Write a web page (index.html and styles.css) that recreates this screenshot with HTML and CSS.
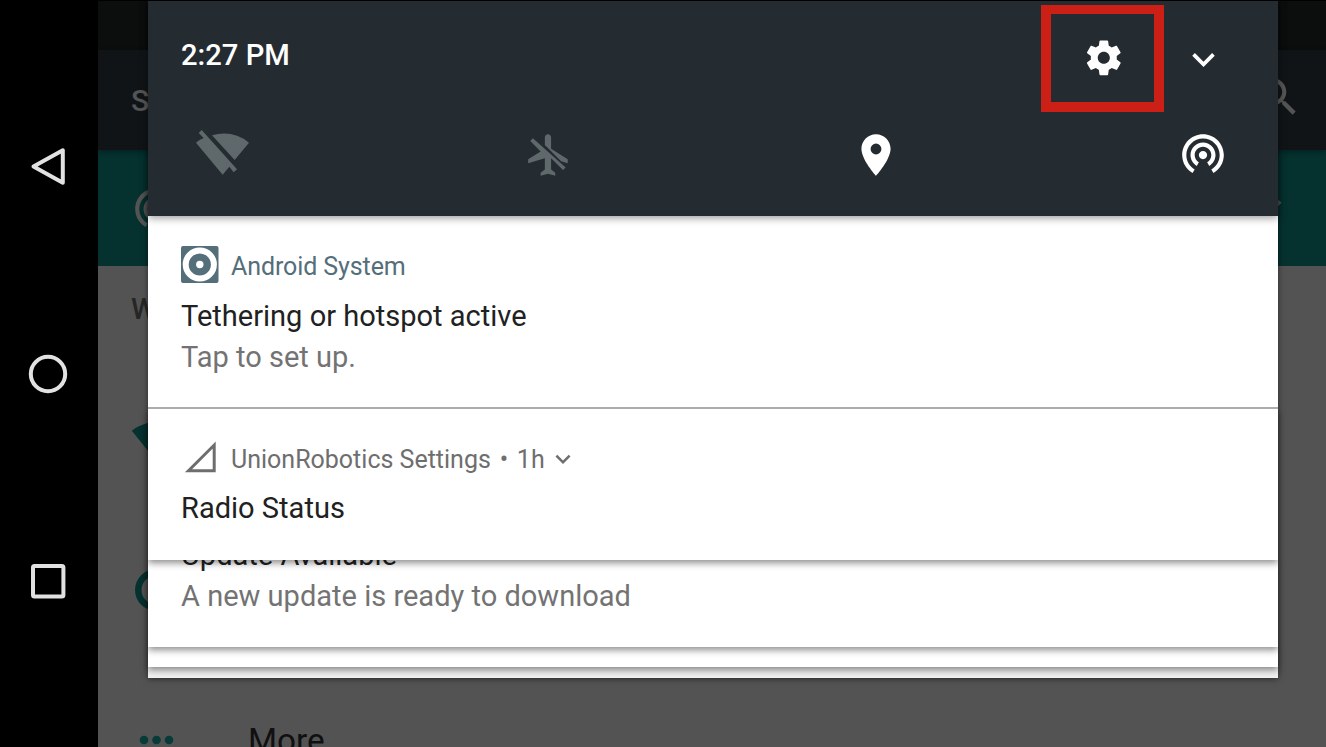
FILE: index.html
```html
<!DOCTYPE html>
<html lang="en">
<head>
<meta charset="utf-8">
<title>Notification shade</title>
<link rel="stylesheet" href="styles.css">
</head>
<body>
<svg class="defs" width="0" height="0">
  <symbol id="tether" viewBox="0 0 24 24"><path d="M12 11c-1.1 0-2 .9-2 2s.9 2 2 2 2-.9 2-2-.9-2-2-2zm6 2c0-3.31-2.69-6-6-6s-6 2.69-6 6c0 2.22 1.21 4.15 3 5.19l1-1.74c-1.19-.7-2-1.97-2-3.45 0-2.21 1.79-4 4-4s4 1.79 4 4c0 1.48-.81 2.75-2 3.45l1 1.74c1.79-1.04 3-2.97 3-5.19zM12 3C6.48 3 2 7.48 2 13c0 3.7 2.01 6.92 4.99 8.65l1-1.73C5.61 18.53 4 15.96 4 13c0-4.42 3.58-8 8-8s8 3.58 8 8c0 2.96-1.61 5.53-4 6.92l1 1.73c2.99-1.73 5-4.95 5-8.65 0-5.52-4.48-10-10-10z"/></symbol>
  <symbol id="chevron" viewBox="0 0 24 24"><path d="M7.41 8.59L12 13.17l4.59-4.58L18 10l-6 6-6-6z"/></symbol>
</svg>
<nav class="navbar">
  <svg class="nav-back" viewBox="0 0 40 44"><path d="M34.800 5.300V37.700L5.500 21.500Z"/></svg>
  <svg class="nav-home" viewBox="0 0 40 40"><circle cx="20" cy="20" r="17.200"/></svg>
  <svg class="nav-recent" viewBox="0 0 40 40"><rect x="5" y="5" width="30.400" height="30.400" rx="1.500"/></svg>
</nav>
<main class="app">
  <div class="app-status"></div>
  <header class="app-bar">
    <span class="app-title">S</span>
    <svg class="app-search" viewBox="0 0 24 24"><path d="M15.500 14h-.79l-.28-.27C15.410 12.590 16 11.110 16 9.500 16 5.910 13.090 3 9.500 3S3 5.910 3 9.500 5.910 16 9.500 16c1.610 0 3.090-.59 4.230-1.570l.27.28v.79l5 4.990L20.490 19l-4.990-5zm-6 0C7.010 14 5 11.990 5 9.500S7.010 5 9.500 5 14 7.010 14 9.500 11.990 14 9.500 14z"/></svg>
  </header>
  <section class="app-banner">
    <svg class="icon50"><use href="#tether"/></svg>
    <svg class="icon50"><use href="#chevron"/></svg>
  </section>
  <section class="app-list">
    <div class="list-heading">W</div>
    <svg class="list-wifi" viewBox="0 0 24 24"><path d="M12.010 21.490L23.640 7c-.45-.34-4.930-4-11.640-4C5.280 3 .81 6.660.36 7l11.630 14.490z"/></svg>
    <svg class="list-data" viewBox="0 0 42 42"><circle cx="21" cy="21" r="17.700"/></svg>
    <div class="list-more">
      <svg class="dots" viewBox="0 0 36 10"><circle cx="5" cy="5" r="4.300"/><circle cx="17.500" cy="5" r="4.300"/><circle cx="30" cy="5" r="4.300"/></svg>
      <span>More</span>
    </div>
  </section>
</main>
<aside class="shade">
  <header class="quick">
    <div class="quick-top">
      <span class="clock">2:27 PM</span>
      <div class="settings-box">
        <svg class="gear" viewBox="0 0 24 24"><path d="M19.430 12.980c.04-.32.070-.64.070-.98s-.03-.66-.07-.98l2.110-1.650c.19-.15.240-.42.120-.64l-2-3.460c-.12-.22-.39-.3-.61-.22l-2.490 1c-.52-.4-1.080-.73-1.690-.98l-.38-2.650C14.460 2.180 14.250 2 14 2h-4c-.25 0-.46.180-.49.420l-.38 2.650c-.61.250-1.170.590-1.690.980l-2.490-1c-.23-.09-.49 0-.61.220l-2 3.460c-.13.220-.07.490.120.640l2.110 1.650c-.04.320-.07.650-.07.980s.03.660.070.980l-2.110 1.650c-.19.150-.24.420-.12.640l2 3.460c.12.220.39.300.61.220l2.490-1c.52.400 1.080.730 1.690.980l.38 2.650c.03.240.240.420.490.420h4c.25 0 .46-.18.490-.42l.38-2.650c.61-.25 1.170-.59 1.690-.98l2.490 1c.23.090.490 0 .61-.22l2-3.460c.12-.22.070-.49-.12-.64l-2.110-1.650zM12 15.500c-1.930 0-3.500-1.570-3.500-3.500s1.570-3.500 3.500-3.500 3.500 1.570 3.500 3.500-1.570 3.500-3.500 3.500z"/></svg>
      </div>
      <svg class="expand"><use href="#chevron"/></svg>
    </div>
    <div class="quick-row">
      <svg class="wifi-off" viewBox="315 386 165 141"><path d="M326 398L335 389 441 507 431 516 418 499 398 523 318 427Q328 418 341 413ZM366 405Q428 388 477 427L434 479Z"/></svg>
      <svg class="icon50 off" viewBox="0 0 24 24"><path d="M13 9V3.500C13 2.670 12.330 2 11.500 2S10 2.670 10 3.500v3.680l7.830 7.830L21 16v-2l-8-5zM3 5.270l4.990 4.990L2 14v2l8-2.500V19l-2 1.500V22l3.500-1 3.500 1v-1.500L13 19v-5.500l5.730 5.730L20 17.960 4.270 4 3 5.270z"/></svg>
      <svg class="icon50" viewBox="0 0 24 24"><path d="M12 2C8.130 2 5 5.130 5 9c0 5.250 7 13 7 13s7-7.750 7-13c0-3.870-3.130-7-7-7zm0 9.700a2.600 2.600 0 1 1 0-5.200 2.600 2.600 0 0 1 0 5.200z"/></svg>
      <svg class="tether-icon" viewBox="0 0 24 24"><use href="#tether"/></svg>
    </div>
  </header>
  <article class="card system">
    <div class="card-head">
      <svg class="card-icon" viewBox="0 0 38 37"><rect width="37.500" height="37" rx="2" fill="#546e7a"/><circle cx="18.800" cy="18.500" r="14.100" fill="none" stroke="#fff" stroke-width="6"/><circle cx="18.800" cy="18.500" r="3.700" fill="#fff"/></svg>
      <span>Android System</span>
    </div>
    <h2>Tethering or hotspot active</h2>
    <p>Tap to set up.</p>
  </article>
  <article class="card radio">
    <div class="card-head">
      <svg class="card-icon" viewBox="0 0 38 37"><path d="M7.500 31.700H33.200V6Z" fill="none" stroke="#6e6e6e" stroke-width="3"/></svg>
      <span>UnionRobotics Settings</span><span class="bullet">•</span><span>1h</span>
      <svg class="card-chevron"><use href="#chevron"/></svg>
    </div>
    <h2>Radio Status</h2>
  </article>
  <article class="card update">
    <h2>Update Available</h2>
    <p>A new update is ready to download</p>
  </article>
  <div class="card stack-one"></div>
  <div class="stack-two"></div>
</aside>
</body>
</html>
```
FILE: styles.css
```css
* { box-sizing: border-box; }
body {
  margin: 0;
  width: 1326px;
  height: 747px;
  display: flex;
  overflow: hidden;
  position: relative;
  background: #000;
  font-family: Roboto, "Liberation Sans", sans-serif;
}
svg { display: block; flex: none; fill: currentColor; }
.defs { position: absolute; }
h2, p { margin: 0; font-weight: 400; font-size: 29.040px; line-height: 40px; white-space: nowrap; }
.icon50 { width: 50px; height: 50px; }

/* navigation bar */
.navbar {
  width: 98px;
  flex: none;
  padding-left: 28px;
  color: #e2e2e2;
}
.navbar svg { fill: none; stroke: currentColor; stroke-width: 4; stroke-linejoin: round; }
.nav-back { width: 40px; height: 44px; margin-top: 145px; }
.nav-home { width: 40px; height: 40px; margin-top: 165px; }
.nav-recent { width: 40px; height: 40px; margin-top: 167px; }

/* dimmed settings app */
.app {
  flex: 1;
  display: flex;
  flex-direction: column;
  padding-top: 1px;
  overflow: hidden;
}
.app-status { height: 49px; flex: none; background: #0b0e0d; }
.app-bar {
  height: 100px;
  flex: none;
  display: flex;
  justify-content: space-between;
  padding: 22px 23px 0 33px;
  background: #101416;
  color: #545454;
  box-shadow: 0 2px 5px rgba(0, 0, 0, .3);
  z-index: 1;
}
.app-title { font-size: 30px; font-weight: 500; line-height: 58px; }
.app-search { width: 50px; height: 50px; }
.app-banner {
  height: 116px;
  flex: none;
  display: flex;
  justify-content: space-between;
  padding: 32px 32px 0 33px;
  background: #05312e;
  color: #545454;
}
.app-list { flex: 1; background: #535353; color: #05312e; }
.list-heading {
  padding: 23px 0 0 33px;
  font-size: 29px;
  font-weight: 500;
  line-height: 40px;
  color: #262626;
}
.list-wifi { width: 54px; height: 54px; margin: 86px 0 0 33px; }
.list-data { width: 42px; height: 42px; margin: 100px 0 0 37px; fill: none; stroke: currentColor; stroke-width: 6.500; }
.list-more {
  display: flex;
  padding: 110px 0 0 41px;
  font-size: 33.300px;
  line-height: 40px;
  color: #101010;
}
.dots { width: 36px; height: 10px; margin: 14px 73px 0 0; color: #063b37; }

/* notification shade */
.shade {
  position: absolute;
  left: 148px;
  top: 1px;
  width: 1130px;
  height: 677px;
  display: flex;
  flex-direction: column;
  background: #f1f1f1;
  box-shadow: 0 1px 6px rgba(0, 0, 0, .5);
}
.quick {
  height: 215px;
  flex: none;
  background: #252c31;
  color: #fff;
  box-shadow: 0 2px 8px rgba(0, 0, 0, .4);
  z-index: 5;
}
.quick-top { display: flex; height: 125px; padding: 4px 52px 0 33px; }
.clock { flex: 1; font-size: 29.170px; font-weight: 500; line-height: 40px; margin-top: 30px; }
.settings-box {
  width: 122.500px;
  height: 107px;
  padding: 23px 0 0 32px;
  border: 10px solid #cc2017;
  border-top-width: 9px;
  margin-right: 17.500px;
}
.gear { width: 41.600px; height: 41.600px; }
.expand { width: 45px; height: 45px; margin-top: 32px; }
.quick-row {
  display: grid;
  grid-template-columns: 329px 327px 327px 50px;
  padding: 4px 0 0 47px;
}
.wifi-off { width: 55px; height: 47px; margin-top: -1px; color: #5f686b; }
.off { color: #5f686b; }
.tether-icon { width: 50px; height: 50px; margin-top: -2px; }

.card {
  position: relative;
  flex: none;
  padding-left: 33px;
  background: #fff;
  color: #212121;
  box-shadow: 0 3px 7px rgba(0, 0, 0, .45);
}
.card p { color: #737373; }
.card-head { display: flex; height: 50px; font-size: 25px; line-height: 41px; color: #6e6e6e; }
.card-icon { width: 38px; height: 37px; margin-right: 12px; }
.bullet { width: 26px; text-align: center; }
.card-chevron { width: 30px; height: 30px; margin: 5px 0 0 3px; }
.system { height: 193px; padding-top: 30px; border-bottom: 2px solid #acacac; z-index: 4; box-shadow: none; }
.system .card-head { color: #546e7a; letter-spacing: -.1px; }
.system p { padding-top: 1px; }
.radio { height: 151px; padding-top: 30px; z-index: 3; }
.radio .card-head { height: 49px; }
.update { height: 87px; z-index: 2; }
.update h2 { margin-top: -25px; height: 41px; }
.stack-one { height: 20px; z-index: 1; }
.stack-two { flex: 1; background: #f1f1f1; }
```
